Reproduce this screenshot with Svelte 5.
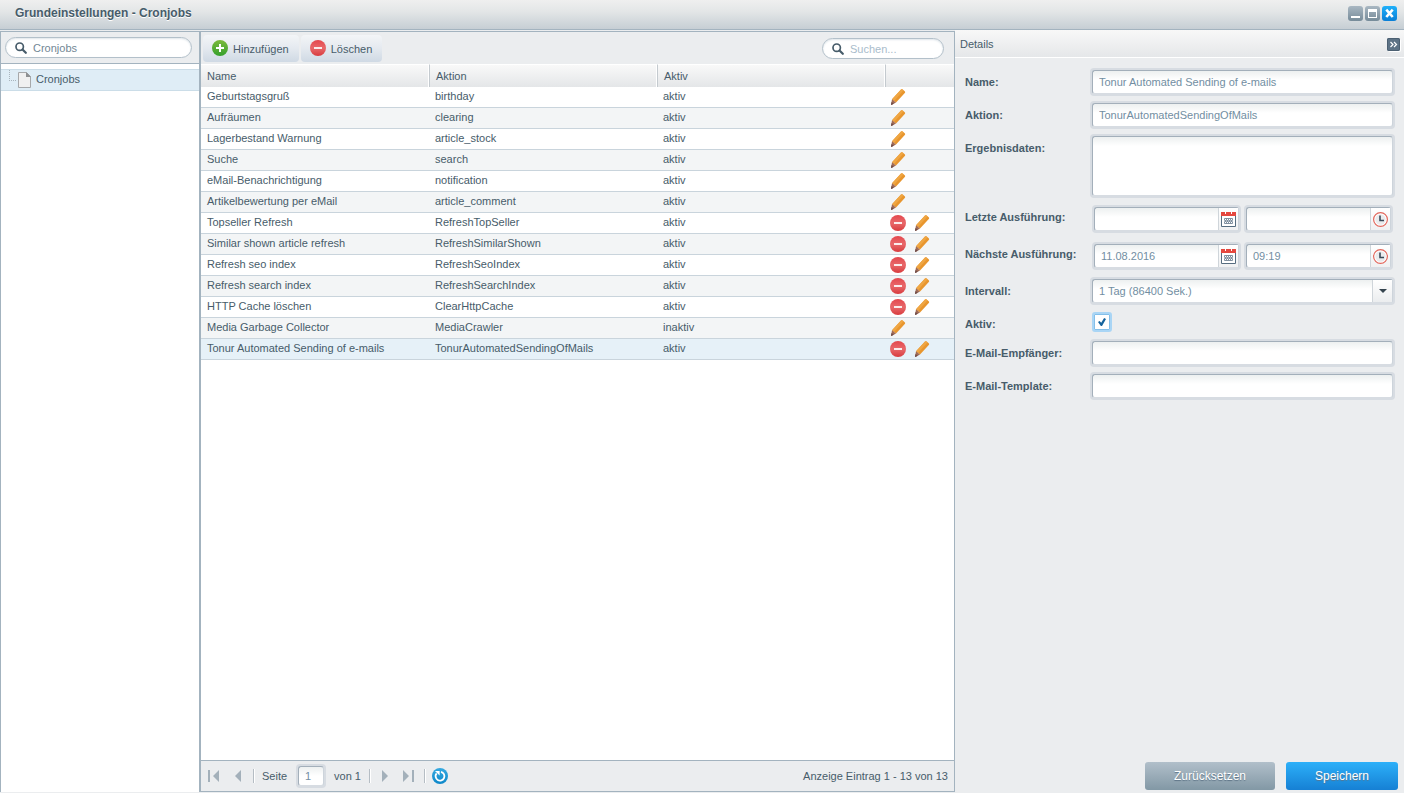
<script lang="ts">
    interface Job {
        name: string;
        action: string;
        active: boolean;
        removable?: boolean;
    }

    const jobs: Job[] = [
        { name: 'Geburtstagsgruß', action: 'birthday', active: true },
        { name: 'Aufräumen', action: 'clearing', active: true },
        { name: 'Lagerbestand Warnung', action: 'article_stock', active: true },
        { name: 'Suche', action: 'search', active: true },
        { name: 'eMail-Benachrichtigung', action: 'notification', active: true },
        { name: 'Artikelbewertung per eMail', action: 'article_comment', active: true },
        { name: 'Topseller Refresh', action: 'RefreshTopSeller', active: true, removable: true },
        { name: 'Similar shown article refresh', action: 'RefreshSimilarShown', active: true, removable: true },
        { name: 'Refresh seo index', action: 'RefreshSeoIndex', active: true, removable: true },
        { name: 'Refresh search index', action: 'RefreshSearchIndex', active: true, removable: true },
        { name: 'HTTP Cache löschen', action: 'ClearHttpCache', active: true, removable: true },
        { name: 'Media Garbage Collector', action: 'MediaCrawler', active: false },
        { name: 'Tonur Automated Sending of e-mails', action: 'TonurAutomatedSendingOfMails', active: true, removable: true }
    ];

    let selected = $state(12);
    let treeFilter = $state('Cronjobs');
    let search = $state('');
    let page = $state('1');

    let form = $state({
        name: 'Tonur Automated Sending of e-mails',
        action: 'TonurAutomatedSendingOfMails',
        data: '',
        lastDate: '',
        lastTime: '',
        nextDate: '11.08.2016',
        nextTime: '09:19',
        interval: '86400',
        active: true,
        recipient: '',
        template: ''
    });
</script>

{#snippet magnifier()}
    <svg class="magnifier" width="12" height="12" viewBox="0 0 12 12" aria-hidden="true">
        <circle cx="4.7" cy="4.7" r="3.7" fill="none" stroke="#475c6a" stroke-width="1.7" />
        <path d="M7.5 7.5L10.8 10.8" stroke="#475c6a" stroke-width="2.2" stroke-linecap="round" />
    </svg>
{/snippet}

{#snippet plus()}
    <svg width="16" height="16" viewBox="0 0 16 16" aria-hidden="true">
        <circle cx="8" cy="8" r="8" fill="url(#green)" />
        <path d="M8 4v8M4 8h8" stroke="#fff" stroke-width="2" />
    </svg>
{/snippet}

{#snippet minus()}
    <svg width="16" height="16" viewBox="0 0 16 16" aria-hidden="true">
        <circle cx="8" cy="8" r="8" fill="url(#red)" />
        <path d="M4 8h8" stroke="#fbecec" stroke-width="2" />
    </svg>
{/snippet}

{#snippet pencil()}
    <svg width="16" height="16" viewBox="0 0 16 16" aria-hidden="true">
        <path d="M2 10.2L11 .6Q11.8-.2 12.7 .5L14.7 2.3Q15.6 3 14.8 3.9L6 13.6Z" fill="#e8962e" />
        <path d="M2 10.2L11 .6Q11.6 0 12.3 .3L13.4 1.4L4.1 11.9Z" fill="#efa643" />
        <path d="M2 10.2L6 13.6L1.4 16L1 15.6Z" fill="#a06a55" />
        <path d="M1.5 13L3.8 14.8L1.4 16L1 15.6Z" fill="#6d4c4a" />
    </svg>
{/snippet}

{#snippet calendar()}
    <svg width="15" height="15" viewBox="0 0 15 15" aria-hidden="true">
        <path d="M.5 2v12.5h14V2" fill="#fff" stroke="#566d80" />
        <path d="M0 0h4v2h1V0h5v2h1V0h4v4H0z" fill="#e5483f" />
        <rect x="3" y="6" width="9" height="6" rx="1" fill="#8191a0" />
        <path d="M4 7.5h7M4 10.5h7" stroke="#fff" stroke-dasharray="1 1" />
        <path d="M3 9h9" stroke="#dfe4e8" stroke-dasharray="1 1" />
    </svg>
{/snippet}

{#snippet clock()}
    <svg width="15" height="15" viewBox="0 0 15 15" aria-hidden="true">
        <circle cx="7.5" cy="7.5" r="6.9" fill="#fff" stroke="#e2675c" stroke-width="1.2" />
        <circle cx="7.5" cy="7.5" r="5.2" fill="#e9ebed" />
        <path d="M7 3.5v5h4" fill="none" stroke="#3a4a57" stroke-width="1.6" />
    </svg>
{/snippet}

<!-- shared gradients for the round icons -->
<svg class="defs" width="0" height="0" aria-hidden="true">
    <linearGradient id="green" x2="0" y2="1">
        <stop stop-color="#7cba3c" /><stop offset="1" stop-color="#35a02c" />
    </linearGradient>
    <linearGradient id="red" x2="0" y2="1">
        <stop stop-color="#e4474d" /><stop offset=".5" stop-color="#e8696b" /><stop offset="1" stop-color="#d83b3e" />
    </linearGradient>
    <linearGradient id="blue" x2="0" y2="1">
        <stop stop-color="#35a9e0" /><stop offset="1" stop-color="#0d87c9" />
    </linearGradient>
</svg>

<div class="window">
    <header class="titlebar">
        <h1>Grundeinstellungen - Cronjobs</h1>
        <div class="tools">
            <button type="button" aria-label="Minimieren">
                <svg width="15" height="15" viewBox="0 0 15 15"><path d="M3 11h9" stroke="#fff" stroke-width="2" /></svg>
            </button>
            <button type="button" aria-label="Maximieren">
                <svg width="15" height="15" viewBox="0 0 15 15"><path d="M3 3h9v9H3zM4 6v5h7V6z" fill="#fff" fill-rule="evenodd" /></svg>
            </button>
            <button type="button" class="close" aria-label="Schließen">
                <svg width="15" height="15" viewBox="0 0 15 15"><path d="M4.3 3.6L10.7 11M10.7 3.6L4.3 11" stroke="#fff" stroke-width="2.6" /></svg>
            </button>
        </div>
    </header>

    <div class="body">
        <nav class="tree">
            <div class="tree-bar">
                <label class="search">
                    {@render magnifier()}
                    <input type="text" aria-label="Filter" bind:value={treeFilter} />
                </label>
            </div>
            <ul>
                <li>
                    <a href="#cronjobs">
                        <svg width="8" height="20" viewBox="0 0 8 20" aria-hidden="true">
                            <path d="M.5 0v11M2 10.5h6" stroke="#a9b4bc" stroke-dasharray="1 1" />
                        </svg>
                        <svg width="13" height="16" viewBox="0 0 13 16" aria-hidden="true">
                            <path d="M.5 .5h8l4 4v11H.5z" fill="#f0f0f0" stroke="#a6a8aa" />
                            <path d="M8 0l5 5H8z" fill="#8e9092" />
                        </svg>
                        <span>Cronjobs</span>
                    </a>
                </li>
            </ul>
        </nav>

        <main class="grid">
            <div class="toolbar">
                <button type="button" class="tool">{@render plus()}Hinzufügen</button>
                <button type="button" class="tool">{@render minus()}Löschen</button>
                <label class="search">
                    {@render magnifier()}
                    <input type="text" placeholder="Suchen..." aria-label="Suchen" bind:value={search} />
                </label>
            </div>

            <div class="rows">
                <table>
                    <thead>
                        <tr>
                            <th>Name</th>
                            <th>Aktion</th>
                            <th>Aktiv</th>
                            <th class="actions" aria-label="Optionen"></th>
                        </tr>
                    </thead>
                    <tbody>
                        {#each jobs as job, i}
                            <tr class:selected={selected === i} onclick={() => (selected = i)}>
                                <td>{job.name}</td>
                                <td>{job.action}</td>
                                <td>{job.active ? 'aktiv' : 'inaktiv'}</td>
                                <td class="options">
                                    <div class="icons">
                                        {#if job.removable}
                                            <button type="button" aria-label="Löschen">{@render minus()}</button>
                                        {/if}
                                        <button type="button" aria-label="Bearbeiten">{@render pencil()}</button>
                                    </div>
                                </td>
                            </tr>
                        {/each}
                    </tbody>
                </table>
            </div>

            <footer class="paging">
                <button type="button" aria-label="Erste Seite">
                    <svg width="12" height="12" viewBox="0 0 12 12"><path d="M0 0h2v12H0zM11 0v12L5 6z" fill="#a3b0ba" /></svg>
                </button>
                <button type="button" class="prev" aria-label="Vorherige Seite">
                    <svg width="6" height="12" viewBox="0 0 6 12"><path d="M6 0v12L0 6z" fill="#a3b0ba" /></svg>
                </button>
                <i class="sep"></i>
                <label for="page">Seite</label>
                <span class="ring"><input id="page" class="box" type="text" bind:value={page} /></span>
                <span>von 1</span>
                <i class="sep"></i>
                <button type="button" class="next" aria-label="Nächste Seite">
                    <svg width="6" height="12" viewBox="0 0 6 12"><path d="M0 0v12L6 6z" fill="#a3b0ba" /></svg>
                </button>
                <button type="button" class="last" aria-label="Letzte Seite">
                    <svg width="12" height="12" viewBox="0 0 12 12"><path d="M10 0h2v12h-2zM1 0v12L7 6z" fill="#a3b0ba" /></svg>
                </button>
                <i class="sep"></i>
                <button type="button" aria-label="Aktualisieren">
                    <svg width="16" height="16" viewBox="0 0 16 16">
                        <circle cx="8" cy="8" r="8" fill="url(#blue)" />
                        <path d="M9 3.9A4.4 4.4 0 1 1 4.6 5.4" fill="none" stroke="#fff" stroke-width="1.8" />
                        <path d="M3 3h4.6v4.6z" fill="#fff" />
                    </svg>
                </button>
                <span class="count">Anzeige Eintrag 1 - 13 von 13</span>
            </footer>
        </main>

        <aside class="details">
            <div class="details-head">
                <h2>Details</h2>
                <button type="button" aria-label="Einklappen">
                    <svg width="13" height="13" viewBox="0 0 13 13"><path d="M3.5 4l2.5 2.5L3.5 9M7 4l2.5 2.5L7 9" fill="none" stroke="#fff" stroke-width="1.2" /></svg>
                </button>
            </div>

            <form onsubmit={(e) => e.preventDefault()}>
                <div class="line">
                    <label for="name">Name:</label>
                    <div class="ring"><input id="name" class="box" type="text" bind:value={form.name} /></div>
                </div>
                <div class="line">
                    <label for="action">Aktion:</label>
                    <div class="ring"><input id="action" class="box" type="text" bind:value={form.action} /></div>
                </div>
                <div class="line">
                    <label for="data">Ergebnisdaten:</label>
                    <div class="ring"><textarea id="data" class="box" bind:value={form.data}></textarea></div>
                </div>
                <div class="line">
                    <label for="last">Letzte Ausführung:</label>
                    <div class="pair">
                        <div class="ring"><div class="box">
                            <input id="last" type="text" bind:value={form.lastDate} />
                            <button type="button" aria-label="Datum wählen">{@render calendar()}</button>
                        </div></div>
                        <div class="ring"><div class="box">
                            <input type="text" aria-label="Uhrzeit" bind:value={form.lastTime} />
                            <button type="button" aria-label="Uhrzeit wählen">{@render clock()}</button>
                        </div></div>
                    </div>
                </div>
                <div class="line">
                    <label for="next">Nächste Ausführung:</label>
                    <div class="pair">
                        <div class="ring"><div class="box">
                            <input id="next" type="text" bind:value={form.nextDate} />
                            <button type="button" aria-label="Datum wählen">{@render calendar()}</button>
                        </div></div>
                        <div class="ring"><div class="box">
                            <input type="text" aria-label="Uhrzeit" bind:value={form.nextTime} />
                            <button type="button" aria-label="Uhrzeit wählen">{@render clock()}</button>
                        </div></div>
                    </div>
                </div>
                <div class="line">
                    <label for="interval">Intervall:</label>
                    <div class="ring">
                        <select id="interval" class="box" bind:value={form.interval}>
                            <option value="86400">1 Tag (86400 Sek.)</option>
                        </select>
                        <span class="arrow">
                            <svg width="8" height="4" viewBox="0 0 8 4" aria-hidden="true"><path d="M0 0h8L4 4z" fill="#35444f" /></svg>
                        </span>
                    </div>
                </div>
                <div class="line">
                    <label for="active">Aktiv:</label>
                    <div class="pair"><input id="active" type="checkbox" bind:checked={form.active} /></div>
                </div>
                <div class="line">
                    <label for="recipient">E-Mail-Empfänger:</label>
                    <div class="ring"><input id="recipient" class="box" type="text" bind:value={form.recipient} /></div>
                </div>
                <div class="line">
                    <label for="template">E-Mail-Template:</label>
                    <div class="ring"><input id="template" class="box" type="text" bind:value={form.template} /></div>
                </div>

                <div class="buttons">
                    <button type="reset">Zurücksetzen</button>
                    <button type="submit" class="primary">Speichern</button>
                </div>
            </form>
        </aside>
    </div>
</div>

<style>
    :global(body) {
        background: #ebedef;
    }

    .window, .window * {
        box-sizing: border-box;
    }

    .window {
        display: flex;
        flex-direction: column;
        min-height: 100vh;
        font: 11px/20px "Liberation Sans", Arial, sans-serif;
        color: #475c6a;
    }

    .defs {
        position: absolute;
    }

    svg {
        display: block;
        flex: none;
    }

    button, input, textarea, select {
        margin: 0;
        padding: 0;
        border: 0;
        background: none;
        font: inherit;
        color: inherit;
        outline: none;
    }

    h1, h2, ul {
        margin: 0;
        padding: 0;
        list-style: none;
    }

    .titlebar {
        display: flex;
        align-items: flex-start;
        justify-content: space-between;
        height: 30px;
        padding: 0 7px 0 15px;
        border-bottom: 1px solid #a3b3bf;
        background: linear-gradient(#efefef, #e3e6e7 40%, #c6ced4);
    }

    h1 {
        font-size: 12px;
        line-height: 26px;
        text-shadow: 0 1px 0 #fff;
    }

    .tools {
        display: flex;
        gap: 2px;
        padding-top: 6px;

        & button {
            border-radius: 3px;
            background: linear-gradient(#a9b7c2, #768b99);
        }

        & .close {
            background: linear-gradient(#1fb0fa, #0a7fd6);
        }
    }

    .body {
        display: flex;
        flex: 1;
    }

    .tree {
        flex: none;
        width: 200px;
        margin: 1px 0;
        border: 1px solid #a3b3bf;
        border-bottom: 0;
        background: #fff;

        & ul {
            padding-top: 5px;
        }

        & a {
            display: flex;
            height: 22px;
            padding-left: 8px;
            border: 1px solid #cbdde8;
            border-width: 1px 0;
            background: #dfedf6;
            color: inherit;
            text-decoration: none;
            align-items: center;
        }

        & a svg + svg {
            margin: 0 5px 0 1px;
        }

        & a span {
            align-self: flex-start;
            line-height: 18px;
        }
    }

    .tree-bar {
        height: 32px;
        padding: 5px 7px 0 4px;
        border-bottom: 1px solid #a3b3bf;
        background: #ebedef;
    }

    .search {
        display: flex;
        align-items: center;
        gap: 6px;
        height: 21px;
        padding: 0 9px;
        border: 1px solid #b3c0ca;
        border-radius: 11px;
        background: #fff;
        box-shadow: inset 0 1px 2px #dfe5ea;

        & input {
            flex: 1;
            min-width: 0;
            color: #728795;
        }

        & input::placeholder {
            color: #a9bccb;
            opacity: 1;
        }
    }

    .grid {
        display: flex;
        flex: 1;
        flex-direction: column;
        min-width: 0;
        margin: 1px 0;
        border: 1px solid #a3b3bf;
        background: #fff;
    }

    .toolbar {
        display: flex;
        align-items: center;
        gap: 2px;
        height: 32px;
        padding: 1px 10px 0 2px;
        background: #ebedef;

        & .search {
            width: 122px;
            margin-left: auto;
        }
    }

    .tool {
        display: flex;
        align-items: center;
        gap: 5px;
        height: 27px;
        padding: 0 10px 0 9px;
        border-radius: 4px;
        background: linear-gradient(#f3f5f7, #e4e9ef 50%, #cfd9e4);

        & :global(svg) {
            margin-bottom: 1px;
        }
    }

    .rows {
        flex: 1;
    }

    table {
        width: 100%;
        table-layout: fixed;
        border-collapse: separate;
        border-spacing: 0;
    }

    th {
        height: 23px;
        padding: 0 6px;
        border-top: 1px solid #fff;
        background: linear-gradient(#f9f9f9, #e4e6e8);
        font-weight: normal;
        text-align: left;
    }

    th + th {
        border-left: 1px solid #c4cacf;
        box-shadow: -1px 0 0 #fff;
    }

    .actions {
        width: 69px;
    }

    td {
        height: 21px;
        padding: 0 6px;
        border-bottom: 1px solid #c9d4dc;
        line-height: 19px;
        vertical-align: top;
        white-space: nowrap;
    }

    td.options {
        padding: 0 5px;
    }

    tbody tr:nth-child(even) {
        background: #f3f5f6;
    }

    tbody tr.selected {
        background: #e6f1f8;
    }

    .icons {
        display: flex;
        gap: 8px;
        padding-top: 2px;
    }

    .paging {
        display: flex;
        align-items: center;
        height: 31px;
        padding: 0 6px 0 7px;
        border-top: 1px solid #a3b3bf;
        background: #ebedef;

        & .prev {
            margin: 0 12px 0 15px;
        }

        & .next {
            margin-left: 12px;
        }

        & .last {
            margin: 0 10px 0 14px;
        }

        & .ring {
            flex: none;
            width: 30px;
            margin: 0 8px 0 9px;
        }

        & .box {
            height: 20px;
        }

        & .sep {
            width: 1px;
            height: 14px;
            margin-right: 8px;
            background: #b5bdc4;
            box-shadow: 1px 0 0 #fff;
        }

        & button + .sep:has(+ button) {
            margin-right: 7px;
        }

        & span + .sep {
            margin: 0 0 0 8px;
        }

        & .count {
            margin-left: auto;
        }
    }

    .details {
        display: flex;
        flex: none;
        flex-direction: column;
        width: 449px;
        background: #ebedef;
    }

    .details-head {
        display: flex;
        align-items: center;
        justify-content: space-between;
        height: 28px;
        padding: 1px 4px 0 5px;
        border-bottom: 1px solid #fff;
        background: linear-gradient(#f8f8f8, #e5e7e9);

        & h2 {
            font-size: 11px;
            font-weight: normal;
        }

        & button {
            border-radius: 2px;
            background: #5d7386;
            box-shadow: inset 0 0 0 1px #4c6072, 1px 1px 0 #fff;
        }
    }

    form {
        display: flex;
        flex: 1;
        flex-direction: column;
        gap: 5px;
        padding: 10px 6px 3px 10px;
    }

    .line {
        display: flex;
        padding-right: 3px;

        & > label {
            flex: none;
            width: 125px;
            padding-top: 4px;
            font-weight: bold;
        }
    }

    .ring {
        position: relative;
        flex: 1;
        min-width: 0;
        padding: 2px;
        border-radius: 4px;
        background: #d7dce2;
    }

    .box {
        display: block;
        width: 100%;
        height: 24px;
        padding: 0 6px;
        border: 1px solid;
        border-color: #a3afba #cdd4db #d7dce2 #a3afba;
        border-radius: 3px;
        background: linear-gradient(#edf0f0, #fff 9px);
        color: #728ea2;
    }

    textarea.box {
        height: 60px;
        resize: none;
    }

    select.box {
        appearance: none;
    }

    .arrow {
        position: absolute;
        top: 3px;
        right: 3px;
        bottom: 3px;
        display: grid;
        place-items: center;
        width: 20px;
        border-left: 1px solid #cfd5da;
        background: linear-gradient(#fff, #ebedef);
        pointer-events: none;
    }

    .pair {
        display: flex;
        flex: 1;
        gap: 3px;
        min-width: 0;
        padding: 2px;

        & .box {
            display: flex;
            padding: 0;
        }

        & .box input {
            flex: 1;
            min-width: 0;
            padding-left: 6px;
        }

        & .box button {
            display: grid;
            place-items: center;
            width: 20px;
            border-left: 1px solid #cfd5da;
            background: linear-gradient(#fff, #f0f1f2);
        }
    }

    input[type="checkbox"] {
        appearance: none;
        display: grid;
        place-items: center;
        width: 20px;
        height: 20px;
        border: 2px solid #a9d5f5;
        border-radius: 3px;
        background: #fff;
        box-shadow: inset 0 0 0 1px #84bfe9;
    }

    input[type="checkbox"]:checked::after {
        content: "";
        width: 8px;
        height: 8px;
        background: #15639c;
        clip-path: polygon(0 50%, 20% 38%, 40% 58%, 76% 0, 100% 12%, 50% 100%, 36% 100%);
    }

    .buttons {
        display: flex;
        justify-content: flex-end;
        gap: 11px;
        margin-top: auto;

        & button {
            width: 130px;
            height: 28px;
            border-radius: 3px;
            background: linear-gradient(#b1bfca, #8298a5);
            color: #fff;
            font-size: 12px;
            text-shadow: 0 1px 1px #5d7386;
        }

        & .primary {
            width: 112px;
            background: linear-gradient(#2cb0f9, #1680d4);
        }
    }
</style>
